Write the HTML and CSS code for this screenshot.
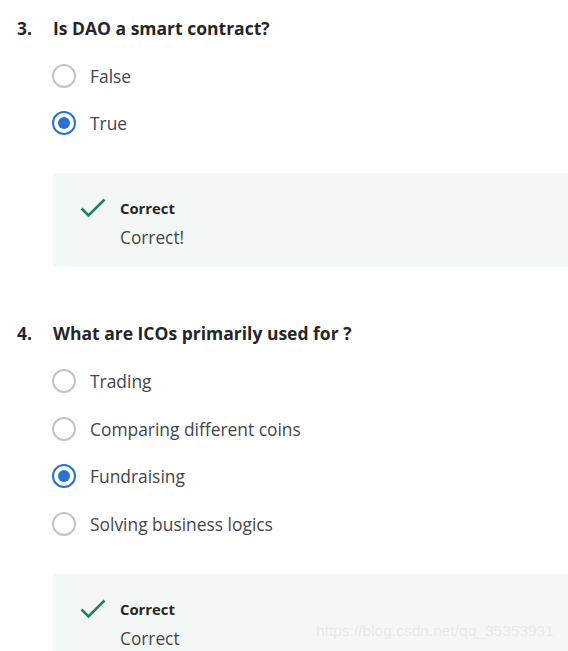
FILE: index.html
```html
<!DOCTYPE html>
<html>
<head>
<meta charset="utf-8">
<link rel="stylesheet" href="styles.css">
</head>
<body>
<div class="page">
  <section class="question">
    <div class="q-head"><span class="q-num">3.</span><span class="q-text">Is DAO a smart contract?</span></div>
    <div class="options">
      <div class="option"><span class="radio"></span><span class="label">False</span></div>
      <div class="option"><span class="radio checked"></span><span class="label">True</span></div>
    </div>
    <div class="feedback">
      <svg class="check" width="26" height="20" viewBox="0 0 26 20"><path d="M1.5 10.5 L8.5 17.5 L24.5 1.5" fill="none" stroke="#1f8354" stroke-width="2.6"/></svg>
      <div class="fb-text">
        <div class="fb-title">Correct</div>
        <div class="fb-body">Correct!</div>
      </div>
    </div>
  </section>
  <section class="question">
    <div class="q-head"><span class="q-num">4.</span><span class="q-text">What are ICOs primarily used for ?</span></div>
    <div class="options">
      <div class="option"><span class="radio"></span><span class="label">Trading</span></div>
      <div class="option"><span class="radio"></span><span class="label">Comparing different coins</span></div>
      <div class="option"><span class="radio checked"></span><span class="label">Fundraising</span></div>
      <div class="option"><span class="radio"></span><span class="label">Solving business logics</span></div>
    </div>
    <div class="feedback">
      <svg class="check" width="26" height="20" viewBox="0 0 26 20"><path d="M1.5 10.5 L8.5 17.5 L24.5 1.5" fill="none" stroke="#1f8354" stroke-width="2.6"/></svg>
      <div class="fb-text">
        <div class="fb-title">Correct</div>
        <div class="fb-body">Correct</div>
      </div>
    </div>
  </section>
  <div class="watermark">https://blog.csdn.net/qq_35353931</div>
</div>
</body>
</html>
```
FILE: styles.css
```css
html, body {
  margin: 0;
  padding: 0;
  background: #fff;
  font-family: "Open Sans", "Noto Sans", sans-serif;
}
.page {
  position: relative;
  width: 568px;
  height: 651px;
  overflow: hidden;
}
.question {
  padding-left: 17px;
}
.question:first-child {
  padding-top: 16px;
}
.question + .question {
  margin-top: 54px;
}
.q-head {
  display: flex;
  font-size: 17.5px;
  font-weight: 700;
  color: #262626;
  line-height: 24px;
}
.q-num {
  width: 36px;
  flex: none;
}
.options {
  margin-top: 12px;
  padding-left: 35px;
  display: flex;
  flex-direction: column;
}
.question + .question .options {
  margin-top: 12.5px;
}
.option {
  display: flex;
  align-items: center;
  height: 47.5px;
}
.radio {
  box-sizing: border-box;
  width: 24px;
  height: 24px;
  border-radius: 50%;
  border: 2px solid #c4c4c4;
  flex: none;
  position: relative;
}
.radio.checked {
  border-color: #2a73cc;
}
.radio.checked::after {
  content: "";
  position: absolute;
  left: 4px;
  top: 4px;
  width: 12px;
  height: 12px;
  border-radius: 50%;
  background: #2a73cc;
}
.label {
  margin-left: 14px;
  font-size: 17.4px;
  color: #43464a;
}
.feedback {
  margin-top: 26px;
  margin-left: 36px;
  background: #f3f8f7;
  height: 94px;
  box-sizing: border-box;
  padding: 24px 0 0 27px;
  display: flex;
  align-items: flex-start;
}
.check {
  flex: none;
  margin-top: 1px;
}
.fb-text {
  margin-left: 14px;
}
.fb-title {
  font-size: 14.8px;
  font-weight: 700;
  color: #262626;
  line-height: 22px;
}
.fb-body {
  font-size: 17.3px;
  color: #43464a;
  line-height: 24px;
  margin-top: 7px;
}
.watermark {
  position: absolute;
  left: 316px;
  top: 622px;
  font-family: "Liberation Sans", Arial, sans-serif;
  font-size: 15.5px;
  color: #e6eae9;
}
```
